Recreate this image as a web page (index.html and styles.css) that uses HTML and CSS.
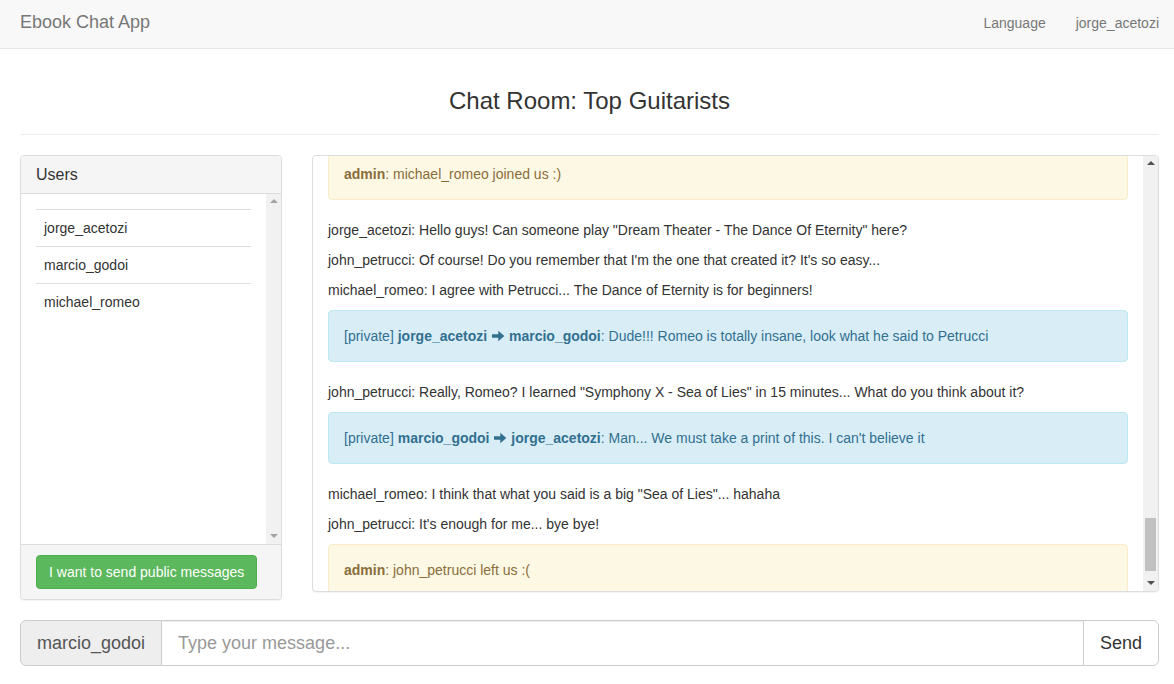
FILE: index.html
```html
<!DOCTYPE html>
<html lang="en">
<head>
<meta charset="utf-8">
<title>Ebook Chat App</title>
<link rel="stylesheet" href="styles.css">
</head>
<body>
<nav class="navbar">
  <a class="brand" href="#">Ebook Chat App</a>
  <ul class="nav">
    <li><a href="#">Language</a></li>
    <li><a href="#">jorge_acetozi</a></li>
  </ul>
</nav>
<main class="page">
  <h3 class="room-title">Chat Room: Top Guitarists</h3>
  <hr class="divider">
  <div class="chat-row">
    <section class="panel users-panel">
      <div class="panel-heading">Users</div>
      <div class="users-body">
        <div class="users-scroll">
          <table class="users-table">
            <tbody>
              <tr><td>jorge_acetozi</td></tr>
              <tr><td>marcio_godoi</td></tr>
              <tr><td>michael_romeo</td></tr>
            </tbody>
          </table>
        </div>
        <div class="scrollbar is-idle" aria-hidden="true">
          <span class="sb-btn sb-up"></span>
          <span class="sb-track"></span>
          <span class="sb-btn sb-down"></span>
        </div>
      </div>
      <div class="panel-footer">
        <button class="btn-success" type="button">I want to send public messages</button>
      </div>
    </section>
    <section class="panel messages-panel">
      <div class="messages">
        <div class="alert alert-warning"><strong>admin</strong>: michael_romeo joined us :)</div>
        <p>jorge_acetozi: Hello guys! Can someone play "Dream Theater - The Dance Of Eternity" here?</p>
        <p>john_petrucci: Of course! Do you remember that I'm the one that created it? It's so easy...</p>
        <p>michael_romeo: I agree with Petrucci... The Dance of Eternity is for beginners!</p>
        <div class="alert alert-info">[private] <strong>jorge_acetozi <svg class="arrow" viewBox="0 0 14 14" width="14" height="14"><path d="M1 5.3h6.3V1.8L13.3 7l-6 5.2V8.7H1z" fill="currentColor"/></svg> marcio_godoi</strong>: Dude!!! Romeo is totally insane, look what he said to Petrucci</div>
        <p>john_petrucci: Really, Romeo? I learned "Symphony X - Sea of Lies" in 15 minutes... What do you think about it?</p>
        <div class="alert alert-info">[private] <strong>marcio_godoi <svg class="arrow" viewBox="0 0 14 14" width="14" height="14"><path d="M1 5.3h6.3V1.8L13.3 7l-6 5.2V8.7H1z" fill="currentColor"/></svg> jorge_acetozi</strong>: Man... We must take a print of this. I can't believe it</div>
        <p>michael_romeo: I think that what you said is a big "Sea of Lies"... hahaha</p>
        <p>john_petrucci: It's enough for me... bye bye!</p>
        <div class="alert alert-warning"><strong>admin</strong>: john_petrucci left us :(</div>
      </div>
      <div class="scrollbar" aria-hidden="true">
        <span class="sb-btn sb-up"></span>
        <span class="sb-track"><span class="sb-thumb"></span></span>
        <span class="sb-btn sb-down"></span>
      </div>
    </section>
  </div>
  <form class="input-group">
    <span class="addon">marcio_godoi</span>
    <input class="msg-input" type="text" placeholder="Type your message...">
    <button class="btn-send" type="button">Send</button>
  </form>
</main>
<script src="script.js"></script>
</body>
</html>
```

FILE: styles.css
```css
* {
  box-sizing: border-box;
}

html, body {
  margin: 0;
  padding: 0;
  background: #fff;
}

body {
  font-family: "Liberation Sans", Arial, Helvetica, sans-serif;
  font-size: 14px;
  line-height: 20px;
  color: #333;
}

/* Navbar */
.navbar {
  display: flex;
  justify-content: space-between;
  align-items: flex-start;
  height: 49px;
  background: #f8f8f8;
  border-bottom: 1px solid #e7e7e7;
  padding-left: 20px;
}

.brand {
  display: block;
  font-size: 18px;
  line-height: 20px;
  padding-top: 12px;
  color: #777;
  text-decoration: none;
}

.nav {
  display: flex;
  list-style: none;
  margin: 0;
  padding: 0;
}

.nav a {
  display: block;
  padding: 13px 15px 0;
  line-height: 20px;
  color: #777;
  text-decoration: none;
}

/* Page */
.page {
  padding: 0 15px 0 20px;
}

.room-title {
  margin: 39px 0 0;
  font-size: 24px;
  font-weight: 500;
  line-height: 26px;
  text-align: center;
  color: #333;
}

.divider {
  margin: 20px 0 20px;
  border: 0;
  border-top: 1px solid #eee;
  height: 0;
}

.chat-row {
  display: grid;
  grid-template-columns: 262px 1fr;
  column-gap: 30px;
  align-items: start;
  margin-bottom: 20px;
}

.panel {
  background: #fff;
  border: 1px solid #ddd;
  border-radius: 4px;
  box-shadow: 0 1px 1px rgba(0, 0, 0, 0.05);
}

/* Users panel */
.users-panel {
  display: flex;
  flex-direction: column;
  height: 445px;
}

.panel-heading {
  padding: 10px 15px;
  font-size: 16px;
  line-height: 17px;
  background: #f5f5f5;
  border-bottom: 1px solid #ddd;
  border-radius: 3px 3px 0 0;
  color: #333;
}

.users-body {
  display: flex;
  height: 350px;
  flex: none;
}

.users-scroll {
  flex: 1;
  min-width: 0;
  padding: 15px;
  overflow: hidden;
}

.users-table {
  width: 100%;
  border-collapse: collapse;
}

.users-table td {
  padding: 8px;
  border-top: 1px solid #ddd;
  line-height: 20px;
}

.panel-footer {
  padding: 10px 15px;
  background: #f5f5f5;
  border-top: 1px solid #ddd;
  border-radius: 0 0 3px 3px;
}

.btn-success {
  display: inline-block;
  padding: 6px 12px;
  font-family: inherit;
  font-size: 14px;
  line-height: 20px;
  color: #fff;
  background: #5cb85c;
  border: 1px solid #4cae4c;
  border-radius: 4px;
  cursor: pointer;
}

/* Messages panel */
.messages-panel {
  display: flex;
  height: 437px;
  overflow: hidden;
}

.messages {
  flex: 1;
  min-width: 0;
  padding: 15px;
  overflow: hidden;
}

.messages p {
  margin: 0 0 10px;
}

.alert {
  padding: 15px;
  margin-bottom: 20px;
  border: 1px solid transparent;
  border-radius: 4px;
}

.alert-warning {
  color: #8a6d3b;
  background: #fcf8e3;
  border-color: #faebcc;
}

.alert-info {
  color: #31708f;
  background: #d9edf7;
  border-color: #bce8f1;
}

.alert strong {
  font-weight: 700;
}

.arrow {
  display: inline-block;
  vertical-align: -2px;
}

/* Scrollbar (drawn) */
.scrollbar {
  display: flex;
  flex-direction: column;
  width: 15px;
  flex: none;
  background: #f1f1f1;
}

.sb-btn {
  display: flex;
  align-items: center;
  justify-content: center;
  height: 15px;
  flex: none;
}

.sb-up::before {
  content: "";
  width: 0;
  height: 0;
  border-left: 4px solid transparent;
  border-right: 4px solid transparent;
  border-bottom: 4px solid #505050;
  margin-bottom: 1px;
}

.sb-down::before {
  content: "";
  width: 0;
  height: 0;
  border-left: 4px solid transparent;
  border-right: 4px solid transparent;
  border-top: 4px solid #505050;
  margin-bottom: 2px;
}

.is-idle .sb-up::before {
  border-bottom-color: #a3a3a3;
}

.is-idle .sb-down::before {
  border-top-color: #a3a3a3;
}

.sb-track {
  flex: 1;
  display: flex;
  flex-direction: column;
  justify-content: flex-end;
  padding: 0 2px 5px;
}

.sb-thumb {
  height: 53px;
  background: #c1c1c1;
}

/* Input group */
.input-group {
  display: flex;
  height: 46px;
  margin: 0;
}

.addon {
  padding: 10px 16px;
  font-size: 18px;
  line-height: 24px;
  color: #555;
  background: #eee;
  border: 1px solid #ccc;
  border-radius: 6px 0 0 6px;
  white-space: nowrap;
}

.msg-input {
  flex: 1;
  min-width: 0;
  height: 46px;
  padding: 10px 16px;
  font-family: inherit;
  font-size: 18px;
  line-height: 24px;
  color: #555;
  background: #fff;
  border: 1px solid #ccc;
  border-left: 0;
  box-shadow: inset 0 1px 1px rgba(0, 0, 0, 0.075);
  outline: none;
}

.msg-input::placeholder {
  color: #999;
}

.btn-send {
  margin-left: -1px;
  padding: 10px 16px;
  font-family: inherit;
  font-size: 18px;
  line-height: 24px;
  color: #333;
  background: #fff;
  border: 1px solid #ccc;
  border-radius: 0 6px 6px 0;
  cursor: pointer;
}
```

FILE: script.js
```js
var box = document.querySelector('.messages');
box.scrollTop = 23;
```
